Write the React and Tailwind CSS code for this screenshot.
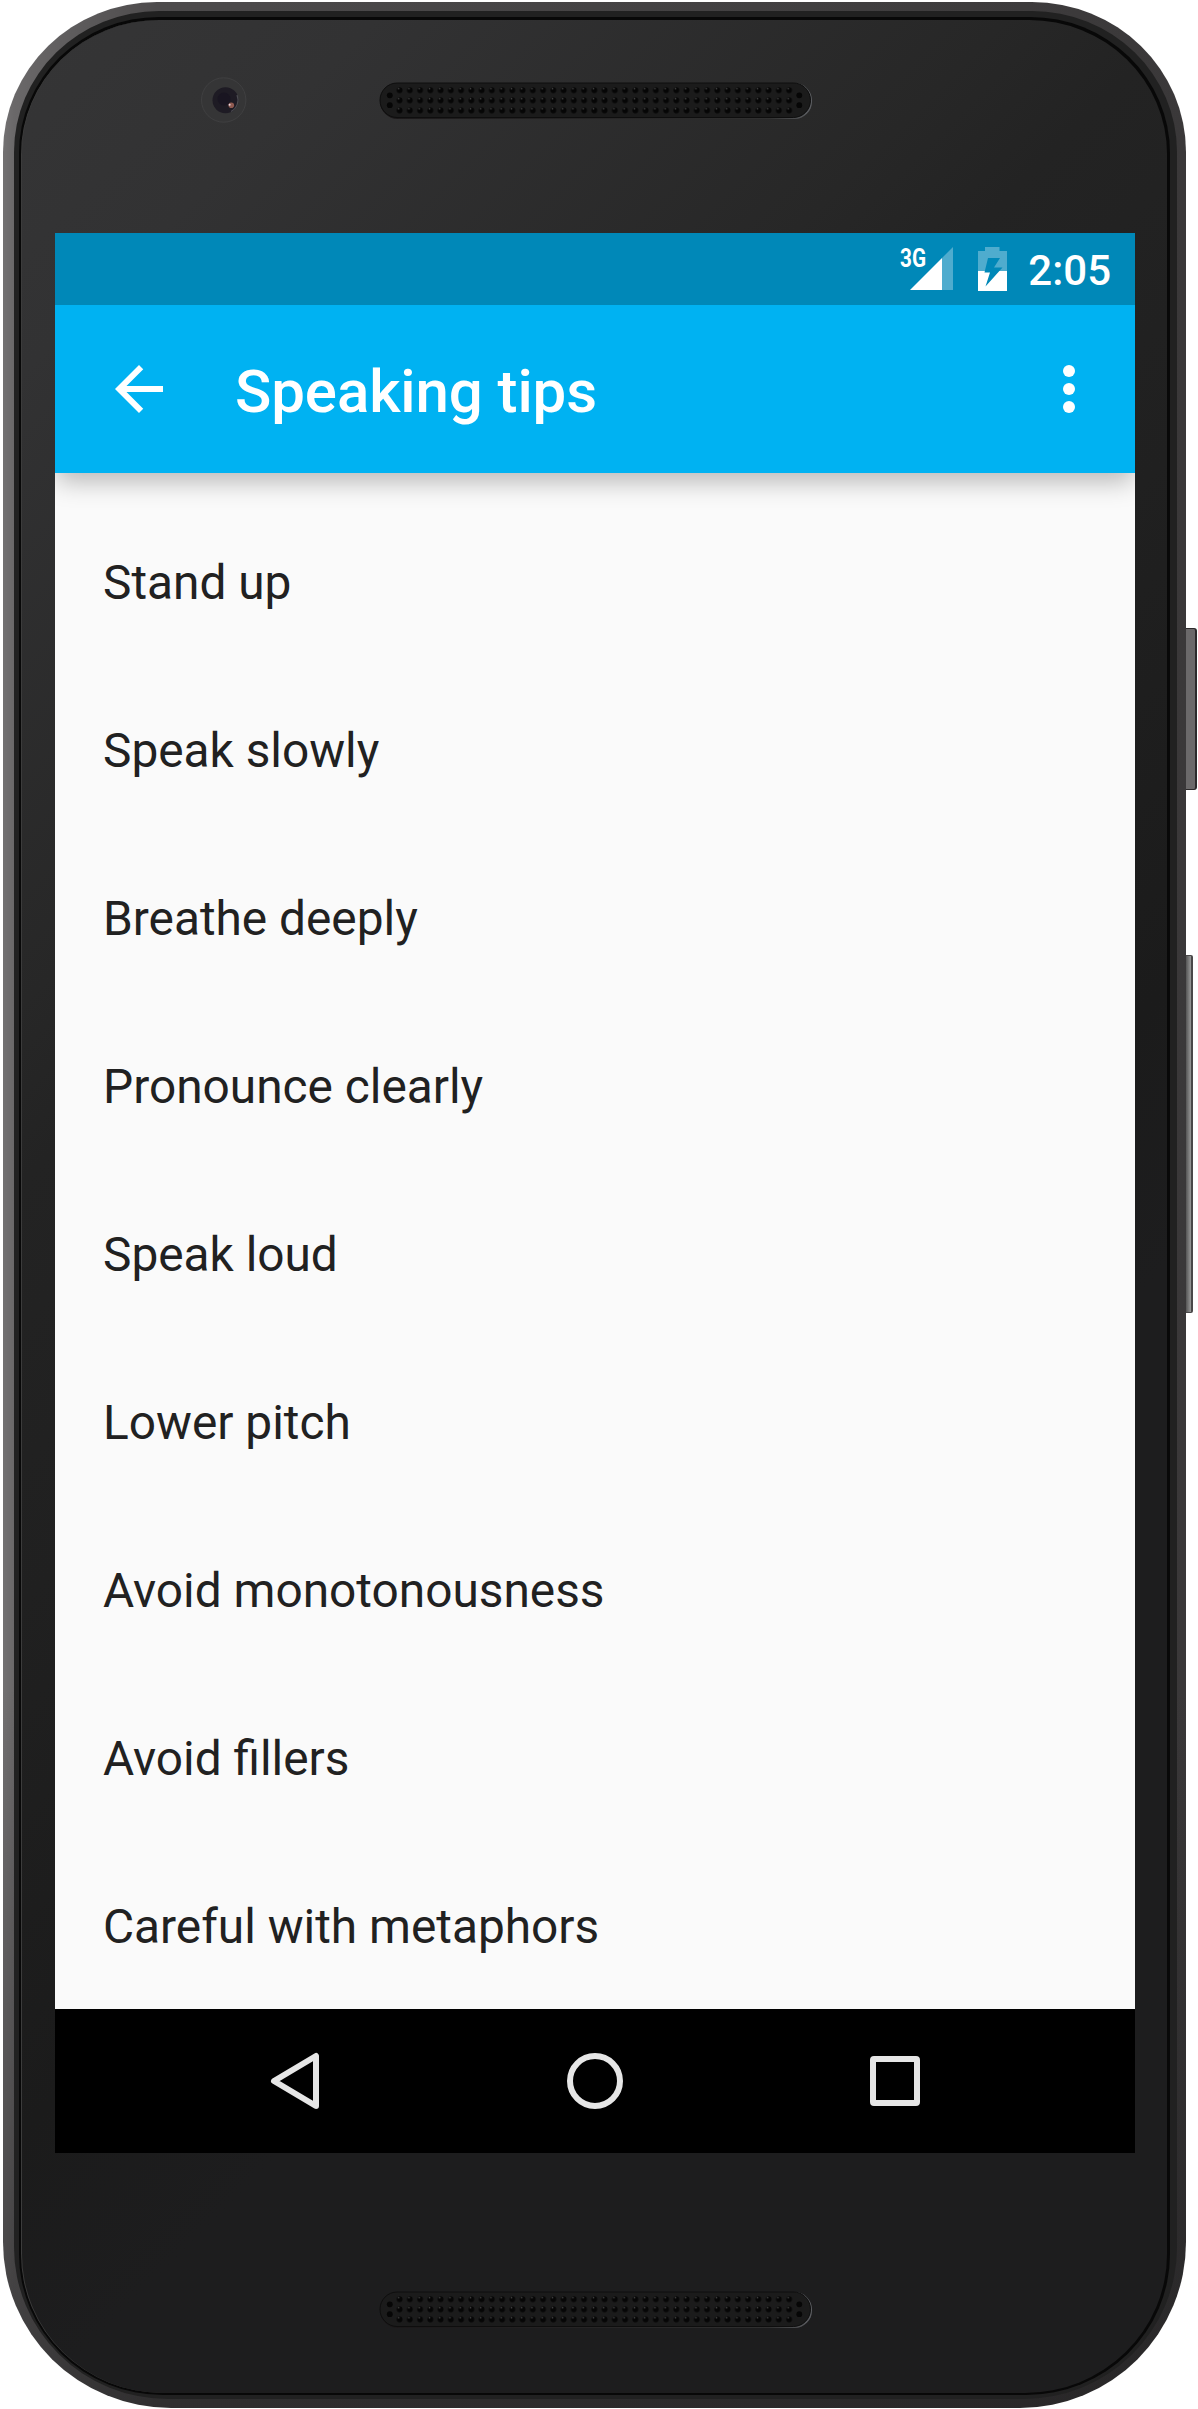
const tips = [
  'Stand up',
  'Speak slowly',
  'Breathe deeply',
  'Pronounce clearly',
  'Speak loud',
  'Lower pitch',
  'Avoid monotonousness',
  'Avoid fillers',
  'Careful with metaphors',
];

function Speaker({ id }) {
  return (
    <svg width="436" height="40" viewBox="0 0 436 40" className="block">
      <defs>
        <pattern id={id} x="0" y="0" width="10.25" height="10.1" patternUnits="userSpaceOnUse">
          <circle cx="5.1" cy="5.05" r="2.9" fill="#060606" />
          <circle cx="4.2" cy="3.4" r="0.8" fill="#404040" />
        </pattern>
        <linearGradient id={id + '-rim'} x1="0" x2="1">
          <stop offset="0" stopColor="#1a1718" />
          <stop offset="0.9" stopColor="#303030" />
          <stop offset="1" stopColor="#5c5e62" />
        </linearGradient>
      </defs>
      <rect x="2" y="2" width="432" height="36" rx="17.5" fill={'url(#' + id + '-rim)'} />
      <rect x="2" y="2" width="430.5" height="34.5" rx="17.2" fill="#1b1b1b" stroke="#0e0e0e" strokeWidth="1" />
      <g transform="translate(16.5 4.2)">
        <rect width="399.75" height="30.3" fill={'url(#' + id + ')'} />
      </g>
      <g fill="#060606">
        <circle cx="11.8" cy="14.3" r="2.9" />
        <circle cx="11.8" cy="24.2" r="2.9" />
        <circle cx="421.3" cy="14.3" r="2.9" />
        <circle cx="421.3" cy="24.2" r="2.9" />
      </g>
    </svg>
  );
}

function Camera() {
  return (
    <svg width="48" height="48" viewBox="0 0 48 48" className="block">
      <circle cx="23.7" cy="24" r="22.2" fill="#353536" stroke="#434344" strokeWidth="0.8" />
      <circle cx="25.5" cy="24.3" r="13" fill="#1e1b24" />
      <path d="M37 19 A13 13 0 0 1 31 35.5" fill="none" stroke="#4b4b50" strokeWidth="1.2" />
      <circle cx="24" cy="23" r="6.5" fill="#191521" />
      <circle cx="31.3" cy="29.2" r="2.8" fill="#8f5a51" />
      <circle cx="29.6" cy="28.8" r="1" fill="#e8d8e0" />
    </svg>
  );
}

export default function App() {
  return (
    <div className="flex h-[2409px] w-[1198px] items-start overflow-hidden bg-white pl-[3px] pt-[2px] font-['Roboto',sans-serif]">
      <div className="h-[2406px] w-[1183px] shrink-0 rounded-tl-[154px_150px] rounded-tr-[154px_150px] rounded-bl-[168px_166px] rounded-br-[166px_166px] bg-[linear-gradient(180deg,transparent_0,transparent_70%,rgba(28,27,28,0.6)_100%),linear-gradient(90deg,#737172_0,#6a6869_11px,#4d4b4c_13%,#454344_50%,#3a3839_100%)] pb-[9px] pl-[11px] pr-[9px] pt-[9px]">
        <div className="h-full rounded-[145px/141px] rounded-bl-[154px_152px] rounded-br-[154px_152px] bg-[#212121] pb-[4px] pl-[5px] pr-[7px] pt-[6px]">
          <div className="h-full rounded-[140px/136px] rounded-bl-[144px_141px] rounded-br-[144px_141px] bg-[#080808] pb-[2px] pl-[2px] pr-[3px] pt-[3px]">
            <div className="flex h-full flex-col items-start rounded-[138px/134px] rounded-bl-[142px_139px] rounded-br-[142px_139px] border-l border-[#3c3c3c] bg-[linear-gradient(135deg,#353536_0%,#323233_10%,#272727_28%,#232323_33%,#202020_45%,#1b1b1b_60%,#1d1d1e_68%,#1d1d1e_100%)] pl-[33px]">
              <header className="flex h-[213px] items-start">
                <div className="ml-[145px] mt-[56px]">
                  <Camera />
                </div>
                <div className="ml-[130px] mt-[61px]">
                  <Speaker id="earpiece" />
                </div>
              </header>

              <main className="flex h-[1920px] w-[1080px] shrink-0 flex-col bg-[#fafafa]">
                <div className="flex h-[72px] shrink-0 items-start justify-end bg-[#0088b8] pr-[24px] text-white">
                  <svg width="60" height="60" viewBox="-4 -12 60 60">
                    <path d="M54 2 V45 H43 V13 Z" fill="#4facce" />
                    <path d="M43 13 V45 H11 Z" fill="#fff" />
                    <text x="1" y="21.8" fontSize="26" fontWeight="700" fill="#fff" textLength="26" lengthAdjust="spacingAndGlyphs">3G</text>
                  </svg>
                  <svg width="29" height="44" viewBox="0 0 29 44" className="ml-[23px] mt-[14px]">
                    <path d="M7 0 H21.5 V4 H29 V24 H0 V4 H7 Z" fill="#4facce" />
                    <path d="M0 24 H29 V44 H0 Z" fill="#fff" />
                    <path d="M10 11 H22 L16 20.5 H24.5 L7.5 39.5 L12 25.5 H6.5 Z" fill="#0088b8" />
                  </svg>
                  <div className="ml-[21px] mt-[13px] text-[42px] font-medium leading-[50px]">2:05</div>
                </div>

                <div className="relative z-10 flex h-[168px] shrink-0 items-center bg-[#00b2f2] pl-[48px] pr-[30px] text-white shadow-[0_10px_24px_-2px_rgba(0,0,0,0.28)] [clip-path:inset(0_0_-40px_0)]">
                  <svg width="72" height="72" viewBox="0 0 24 24" fill="currentColor">
                    <path d="M20 11H7.83l5.59-5.59L12 4l-8 8 8 8 1.41-1.41L7.83 13H20v-2z" />
                  </svg>
                  <h1 className="ml-[60px] flex-1 pt-[5px] text-[60px] font-medium leading-[70px] tracking-[-0.1px]">Speaking tips</h1>
                  <svg width="72" height="72" viewBox="0 0 24 24" fill="currentColor">
                    <circle cx="12" cy="6" r="2" />
                    <circle cx="12" cy="12" r="2" />
                    <circle cx="12" cy="18" r="2" />
                  </svg>
                </div>

                <ul className="flex flex-1 flex-col pt-[24px]">
                  {tips.map((tip) => (
                    <li key={tip} className="flex h-[168px] shrink-0 items-center pl-[48px] pt-[4px] text-[47.8px] leading-[56px] text-[#212121]">
                      {tip}
                    </li>
                  ))}
                </ul>

                <nav className="flex h-[144px] shrink-0 items-center justify-between bg-black px-[204px]">
                  <svg width="72" height="72" viewBox="0 0 72 72" fill="none" stroke="#e6e6e6" strokeWidth="6" strokeLinejoin="round">
                    <path d="M57 11 V61 L15 36 Z" />
                  </svg>
                  <svg width="72" height="72" viewBox="0 0 72 72" fill="none" stroke="#e6e6e6" strokeWidth="6">
                    <circle cx="36" cy="36" r="25" />
                  </svg>
                  <svg width="72" height="72" viewBox="0 0 72 72" fill="none" stroke="#e6e6e6" strokeWidth="6">
                    <rect x="14" y="14" width="44" height="44" rx="1" />
                  </svg>
                </nav>
              </main>

              <footer className="ml-[323px] mt-[137px]">
                <Speaker id="bottom-speaker" />
              </footer>
            </div>
          </div>
        </div>
      </div>

      <aside className="flex h-full w-[12px] shrink-0 flex-col items-start pt-[626px]">
        <div className="h-[162px] w-[11px] rounded-r-[3px] border-y border-r-2 border-[#2c2a2b] bg-[#6b696a]" />
        <div className="mt-[165px] h-[358px] w-[7px] rounded-r-[2px] border-y border-r-2 border-[#4a4849] bg-[linear-gradient(90deg,#555,#999)]" />
      </aside>
    </div>
  );
}
